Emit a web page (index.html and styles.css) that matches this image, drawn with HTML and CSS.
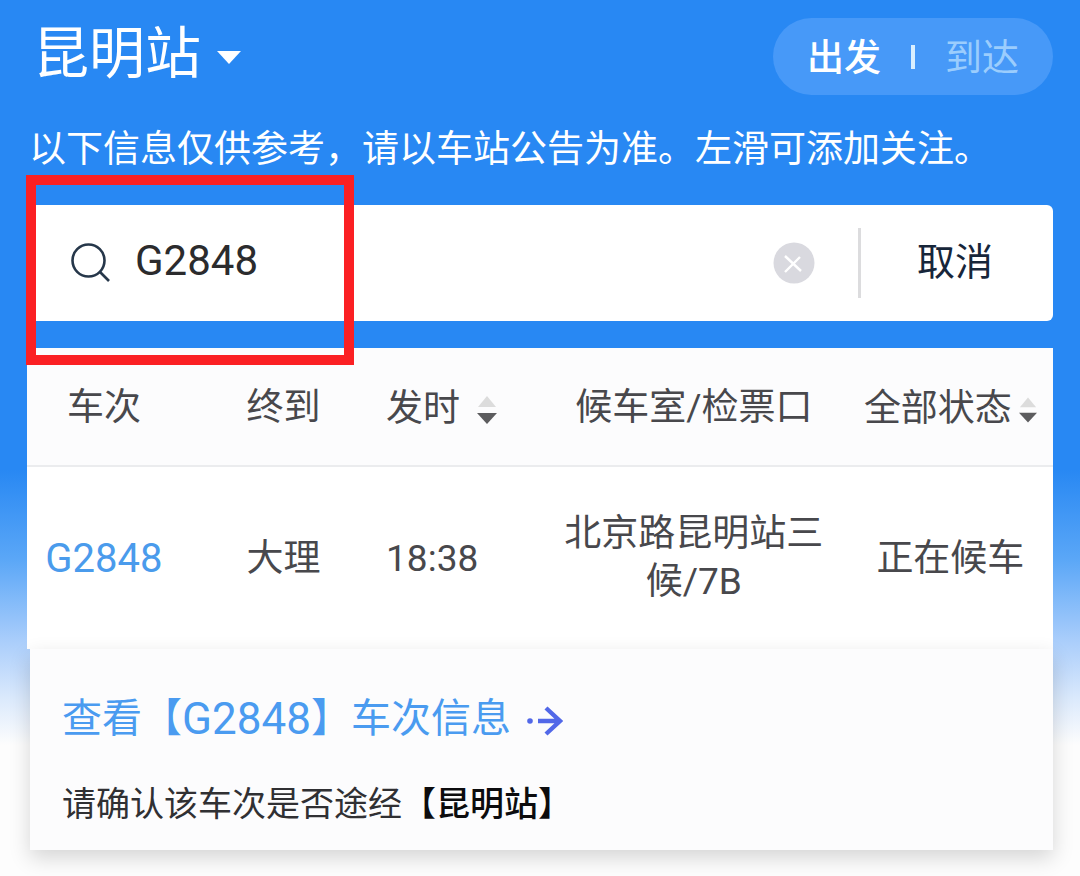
FILE: index.html
```
<!DOCTYPE html>
<html lang="zh-CN">
<head>
    <meta charset="UTF-8">
    <meta name="viewport" content="width=device-width, initial-scale=1.0">
    <title>昆明站</title>
    <link rel="stylesheet" href="styles.css">
</head>
<body>
    <div class="page">
        <header class="header">
            <button type="button" class="station-btn">
                昆明站
                <svg width="24" height="13" viewBox="0 0 24 13" aria-hidden="true"><path d="M0 0h24L12 13z" fill="#fff"/></svg>
            </button>
            <div class="switch">
                <button type="button" class="switch-btn active">出发</button>
                <span class="switch-line"></span>
                <button type="button" class="switch-btn">到达</button>
            </div>
        </header>
        <p class="notice">以下信息仅供参考，请以车站公告为准。左滑可添加关注。</p>

        <form class="search">
            <label for="train" class="search-icon" aria-label="车次">
                <svg width="40" height="40" viewBox="0 0 40 40" fill="none" stroke="#26374a" stroke-width="2.6"><circle cx="17.5" cy="17.5" r="16"/><path d="M28.5 28.5 38 38"/></svg>
            </label>
            <input type="text" id="train" class="search-input" value="G2848">
            <button type="button" class="clear-btn" aria-label="清除">
                <svg width="42" height="42" viewBox="0 0 42 42"><circle cx="21" cy="21" r="20.5" fill="#d9d9df"/><path d="M12 14l16 15M27 15 12 30" stroke="#fff" stroke-width="2.4"/></svg>
            </button>
            <button type="button" class="cancel-btn">取消</button>
            <span class="highlight"></span>
        </form>

        <table class="trains">
            <thead>
                <tr>
                    <th class="col-train">车次</th>
                    <th class="col-end">终到</th>
                    <th class="col-time">
                        <button type="button" class="sort-btn">发时
                            <svg width="20" height="28" viewBox="0 0 20 28"><path d="M10 0l9 11H1z" fill="#dcdcdc"/><path d="M0 17h20L10 28z" fill="#5c5c5e"/></svg>
                        </button>
                    </th>
                    <th class="col-gate">候车室/检票口</th>
                    <th class="col-status">
                        <button type="button" class="sort-btn tight">全部状态
                            <svg width="18" height="28" viewBox="0 0 20 28"><path d="M10 0l9 11H1z" fill="#dcdcdc"/><path d="M0 17h20L10 28z" fill="#5c5c5e"/></svg>
                        </button>
                    </th>
                </tr>
            </thead>
            <tbody>
                <tr>
                    <td><a href="#" class="train-link">G2848</a></td>
                    <td>大理</td>
                    <td class="col-time">18:38</td>
                    <td class="col-gate">北京路昆明站三候/7B</td>
                    <td>正在候车</td>
                </tr>
            </tbody>
        </table>

        <section class="info-card">
            <a href="#" class="info-link">查看【<span class="info-train">G2848</span>】车次信息
                <svg width="36" height="32" viewBox="0 0 36 32" fill="none" stroke="#5268e8" stroke-width="4.4"><circle cx="3" cy="16" r="2.8" fill="#5268e8" stroke="none"/><path d="M11 16h22M19 3l14 13-14 13"/></svg>
            </a>
            <p class="info-tip">请确认该车次是否途经<strong>【昆明站】</strong></p>
        </section>
    </div>
</body>
</html>
```
FILE: styles.css
```
* {
    margin: 0;
    padding: 0;
    box-sizing: border-box;
}

body {
    background: #fdfdfd;
    font-family: Roboto, 'Noto Sans CJK SC', sans-serif;
    min-height: 100vh;
}

button, input {
    font: inherit;
    color: inherit;
    background: none;
    border: none;
}

button {
    cursor: pointer;
}

a {
    text-decoration: none;
}

svg {
    display: block;
    flex-shrink: 0;
}

.page {
    padding: 18px 27px 26px;
    background: linear-gradient(#2888f3 470px, #5ba7f7 560px, #a9cdfb 640px, #dceafc 700px, #fdfdfd 745px);
}

.header {
    display: flex;
    justify-content: space-between;
    align-items: center;
    color: #fff;
}

.station-btn {
    display: flex;
    align-items: center;
    gap: 16px;
    padding: 0 0 6px 6px;
    font-size: 56px;
    line-height: 70px;
}

.station-btn svg {
    margin-top: 8px;
}

.switch {
    display: flex;
    align-items: center;
    gap: 30px;
    height: 77px;
    padding: 0 34px;
    border-radius: 39px;
    background: #4799f8;
}

.switch-btn {
    padding-top: 4px;
    font-size: 37px;
    line-height: 48px;
    color: #9bcdfd;
}

.switch-btn.active {
    color: #fff;
    font-weight: 500;
}

.switch-line {
    width: 4px;
    height: 24px;
    background: #d9efff;
}

.notice {
    padding: 31px 2px 31px;
    font-size: 37px;
    line-height: 48px;
    color: #fff;
}

.search {
    position: relative;
    display: flex;
    align-items: center;
    height: 116px;
    margin-bottom: 27px;
    padding-left: 44px;
    background: #fff;
    border-radius: 6px;
}

.search-input {
    flex: 1;
    min-width: 0;
    padding: 0 24px 4px;
    font-size: 42px;
    line-height: 56px;
    color: #2b2b2d;
    outline: none;
}

.clear-btn {
    margin-right: 43px;
}

.cancel-btn {
    width: 195px;
    height: 70px;
    padding: 0 4px 10px 0;
    border-left: 3px solid #dcdcde;
    font-size: 38px;
    color: #17263a;
}

/* red frame around the search keyword */
.highlight {
    position: absolute;
    top: -30px;
    left: -1px;
    width: 328px;
    height: 190px;
    border: 10px solid #fb2023;
    pointer-events: none;
}

.trains {
    width: 100%;
    table-layout: fixed;
    border-collapse: collapse;
    background: #fff;
    font-size: 37px;
    line-height: 48px;
    color: #48484c;
    text-align: center;
}

.trains th {
    height: 118px;
    padding-top: 2px;
    font-weight: 400;
    background: #fcfcfd;
    border-bottom: 2px solid #ebecee;
}

.trains td {
    height: 183px;
    padding-top: 2px;
}

.col-train {
    width: 15%;
}

.col-end {
    width: 20%;
}

.col-time {
    width: 15%;
    text-align: left;
}

.col-gate {
    width: 30%;
}

td.col-gate {
    padding: 0 22px;
}

.col-status {
    width: 20%;
}

.sort-btn {
    display: inline-flex;
    align-items: center;
    gap: 17px;
    vertical-align: middle;
    white-space: nowrap;
}

.sort-btn.tight {
    gap: 7px;
}

.sort-btn svg {
    margin-top: 2px;
}

.train-link {
    font-size: 40px;
    color: #4a9bec;
}

.info-card {
    margin-left: 3px;
    padding: 42px 32px 18px;
    background: #fcfcfd;
    box-shadow: 0 8px 20px rgba(0, 0, 0, 0.16);
}

.info-link {
    display: flex;
    align-items: center;
    font-size: 40px;
    line-height: 56px;
    color: #4a9bf0;
}

.info-link svg {
    margin: 4px 0 0 16px;
}

.info-train {
    font-size: 44px;
}

.info-tip {
    padding-top: 29px;
    font-size: 34px;
    line-height: 56px;
    color: #303033;
}

.info-tip strong {
    font-weight: 500;
    color: #0c0c0e;
}
```
